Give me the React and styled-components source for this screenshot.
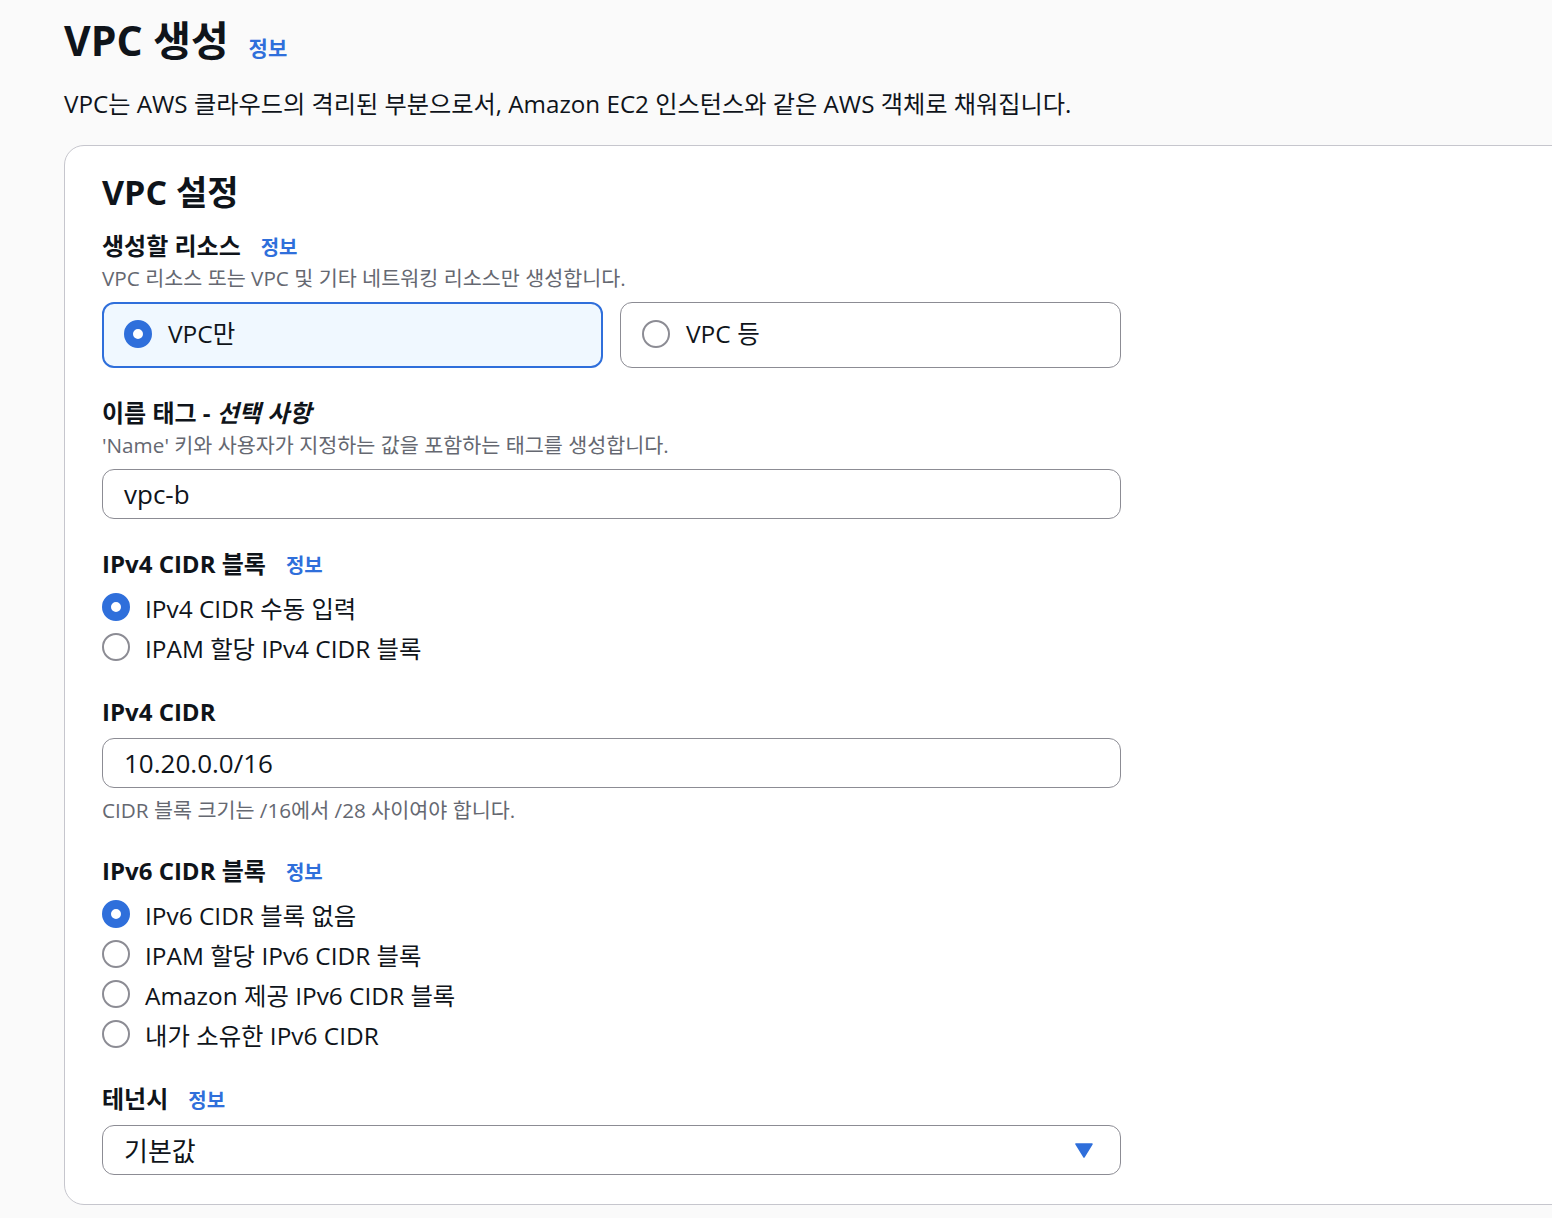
import { createGlobalStyle, styled } from "styled-components"

const GlobalStyle = createGlobalStyle`
  html, body {
    margin: 0;
    padding: 0;
    background: #fafafa;
    overflow-x: hidden;
  }
  body {
    font-family: "Open Sans", "Noto Sans CJK KR", sans-serif;
    color: #0f141a;
  }
`

const Page = styled.div`
  padding: 15px 0 0 64px;
  min-height: 1218px;
  box-sizing: border-box;
  overflow: hidden;
`

const TitleRow = styled.div`
  display: flex;
  align-items: baseline;
  gap: 20px;
`

const Title = styled.h1`
  margin: 0;
  font-size: 41px;
  line-height: 50px;
  font-weight: 700;
`

const Info = styled.span`
  color: #2f6fdb;
  font-weight: 700;
  font-size: ${(p) => (p.$small ? "20px" : "21px")};
`

const Lead = styled.p`
  margin: 24px 0 0;
  font-size: 24.2px;
  line-height: 30px;
`

const Card = styled.section`
  margin-top: 26px;
  width: 1600px;
  background: #ffffff;
  border: 1px solid #c6c6cd;
  border-radius: 20px;
  padding: 24px 38px 29px 37px;
  box-sizing: border-box;
`

const CardTitle = styled.h2`
  margin: 0 0 17px;
  font-size: 34px;
  line-height: 44px;
  font-weight: 700;
`

const Fields = styled.div`
  width: 1019px;
  display: flex;
  flex-direction: column;
  gap: 30px;
`

const Field = styled.div`
  display: flex;
  flex-direction: column;
  margin-top: ${(p) => p.$shift || 0}px;
`

const LabelRow = styled.div`
  display: flex;
  align-items: baseline;
  gap: 20px;
`

const Label = styled.div`
  font-size: 24px;
  line-height: 30px;
  font-weight: 700;

  em {
    font-style: italic;
  }
`

const Hint = styled.div`
  font-size: 20.7px;
  line-height: 28px;
  color: #656871;
  margin-top: ${(p) => p.$top || 3}px;
`

const Tiles = styled.div`
  margin-top: 10px;
  display: grid;
  grid-template-columns: 1fr 1fr;
  gap: 17px;
`

const Tile = styled.div`
  height: 66px;
  box-sizing: border-box;
  border-radius: 12px;
  border: ${(p) => (p.$on ? "2px solid #2f6fdb" : "1px solid #8c8c94")};
  background: ${(p) => (p.$on ? "#f0f8ff" : "#ffffff")};
  display: flex;
  align-items: center;
  gap: 16px;
  padding: 0 0 3px ${(p) => (p.$on ? "20px" : "21px")};
  font-size: 24.5px;
  line-height: 30px;
`

const Radio = styled.span`
  width: 28px;
  height: 28px;
  box-sizing: border-box;
  border-radius: 50%;
  flex-shrink: 0;
  border: ${(p) => (p.$on ? "9px solid #2f6fdb" : "2px solid #8c8c94")};
  background: #ffffff;
`

const RadioList = styled.div`
  margin-top: 8px;
  display: flex;
  flex-direction: column;
`

const RadioRow = styled.div`
  height: 40px;
  display: flex;
  align-items: center;
  gap: 15px;
  font-size: 24.4px;
`

const Input = styled.div`
  margin-top: ${(p) => p.$top || 10}px;
  height: 50px;
  box-sizing: border-box;
  border: 1px solid #8c8c94;
  border-radius: 12px;
  background: #ffffff;
  display: flex;
  align-items: center;
  justify-content: space-between;
  padding: 0 27px 0 21px;
  font-size: 26px;
`

const Caret = styled.svg`
  width: 18px;
  height: 15px;
  fill: #2f6fdb;
`

const cidrV4 = [
  { text: "IPv4 CIDR 수동 입력", on: true },
  { text: "IPAM 할당 IPv4 CIDR 블록" },
]

const cidrV6 = [
  { text: "IPv6 CIDR 블록 없음", on: true },
  { text: "IPAM 할당 IPv6 CIDR 블록" },
  { text: "Amazon 제공 IPv6 CIDR 블록" },
  { text: "내가 소유한 IPv6 CIDR" },
]

function RadioGroup({ items }) {
  return (
    <RadioList>
      {items.map((it) => (
        <RadioRow key={it.text}>
          <Radio $on={it.on} />
          {it.text}
        </RadioRow>
      ))}
    </RadioList>
  )
}

export default function App() {
  return (
    <Page>
      <GlobalStyle />
      <TitleRow>
        <Title>VPC 생성</Title>
        <Info>정보</Info>
      </TitleRow>
      <Lead>
        VPC는 AWS 클라우드의 격리된 부분으로서, Amazon EC2 인스턴스와 같은 AWS 객체로 채워집니다.
      </Lead>

      <Card>
        <CardTitle>VPC 설정</CardTitle>
        <Fields>
          <Field>
            <LabelRow>
              <Label>생성할 리소스</Label>
              <Info $small>정보</Info>
            </LabelRow>
            <Hint>VPC 리소스 또는 VPC 및 기타 네트워킹 리소스만 생성합니다.</Hint>
            <Tiles>
              <Tile $on>
                <Radio $on />
                VPC만
              </Tile>
              <Tile>
                <Radio />
                VPC 등
              </Tile>
            </Tiles>
          </Field>

          <Field>
            <Label>
              이름 태그 - <em>선택 사항</em>
            </Label>
            <Hint>'Name' 키와 사용자가 지정하는 값을 포함하는 태그를 생성합니다.</Hint>
            <Input>vpc-b</Input>
          </Field>

          <Field>
            <LabelRow>
              <Label>IPv4 CIDR 블록</Label>
              <Info $small>정보</Info>
            </LabelRow>
            <RadioGroup items={cidrV4} />
          </Field>

          <Field>
            <Label>IPv4 CIDR</Label>
            <Input $top={11}>10.20.0.0/16</Input>
            <Hint $top={8}>CIDR 블록 크기는 /16에서 /28 사이여야 합니다.</Hint>
          </Field>

          <Field $shift={2}>
            <LabelRow>
              <Label>IPv6 CIDR 블록</Label>
              <Info $small>정보</Info>
            </LabelRow>
            <RadioGroup items={cidrV6} />
          </Field>

          <Field>
            <LabelRow>
              <Label>테넌시</Label>
              <Info $small>정보</Info>
            </LabelRow>
            <Input $top={11}>
              기본값
              <Caret viewBox="0 0 18 15">
                <path d="M1 1 H17 L9 14 Z" strokeLinejoin="round" stroke="#2f6fdb" strokeWidth="1.5" />
              </Caret>
            </Input>
          </Field>
        </Fields>
      </Card>
    </Page>
  )
}
